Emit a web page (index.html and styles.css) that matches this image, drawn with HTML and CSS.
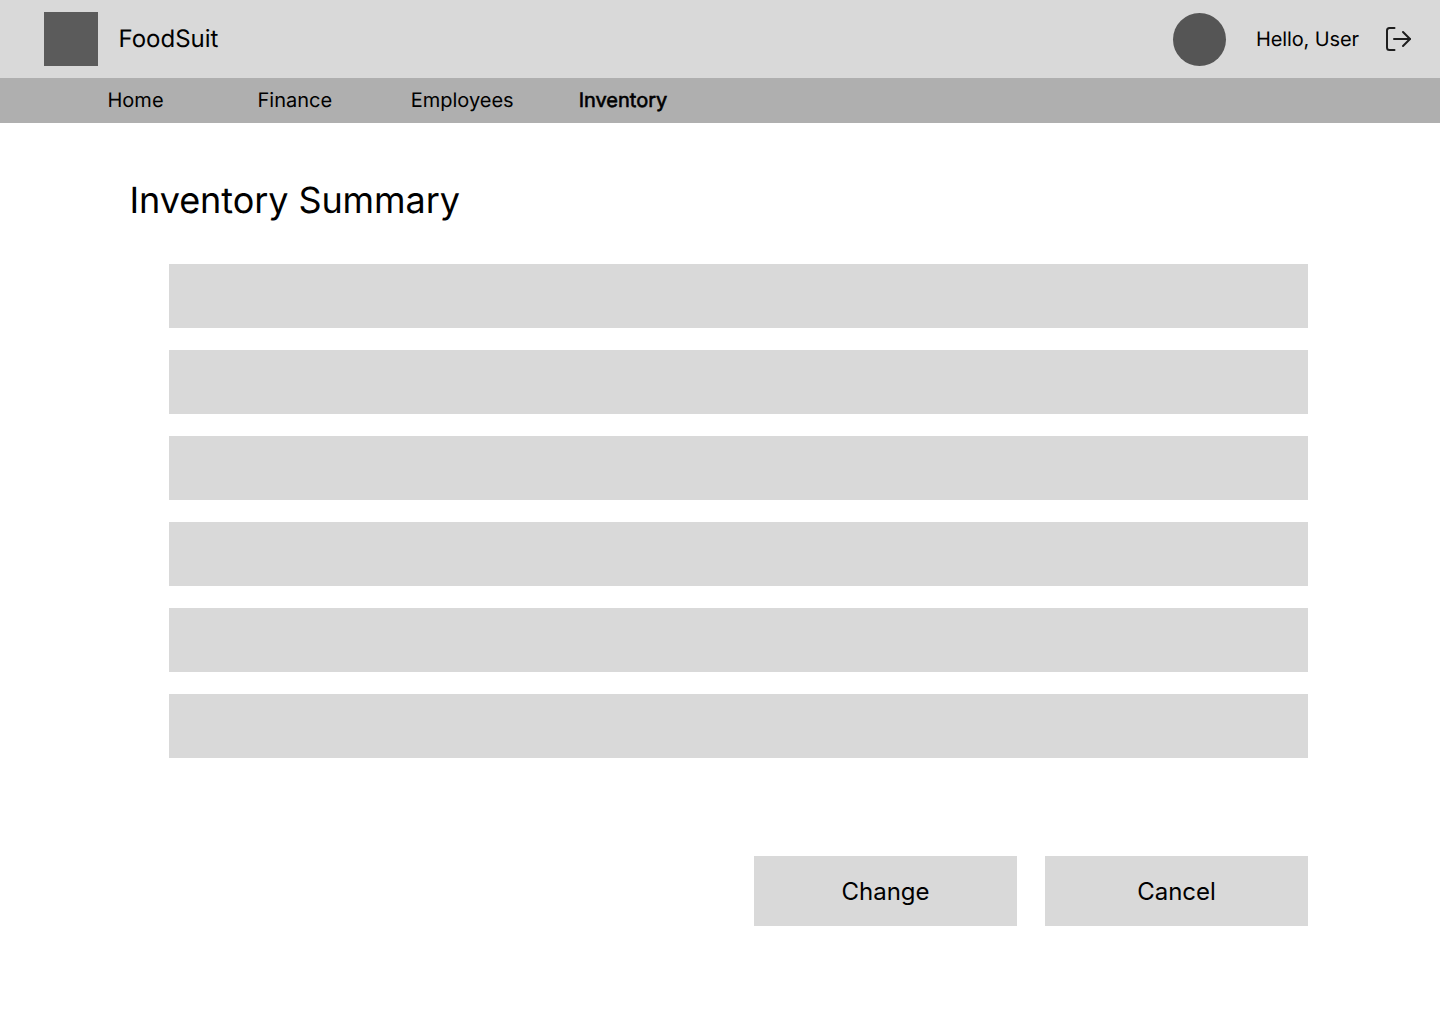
FILE: index.html
```html
<!DOCTYPE html>
<html lang="en">
<head>
    <meta charset="UTF-8">
    <meta name="viewport" content="width=device-width, initial-scale=1.0">
    <title>FoodSuit - Inventory Summary</title>
    <link rel="stylesheet" href="styles.css">
</head>
<body>
    <header class="topbar">
        <div class="brand">
            <div class="logo"></div>
            <span class="brand-name">FoodSuit</span>
        </div>
        <div class="user">
            <div class="avatar"></div>
            <span class="greeting">Hello, User</span>
            <svg class="logout" width="28" height="28" viewBox="0 0 28 28" fill="none" stroke="#1e1e1e" stroke-width="2" stroke-linecap="round" stroke-linejoin="round">
                <path d="M10.500 3H5.500C4 3 3 4 3 5.500V22.500C3 24 4 25 5.500 25H10.500"/>
                <path d="M10 14H26"/>
                <path d="M19 7L26 14L19 21"/>
            </svg>
        </div>
    </header>

    <nav class="mainnav">
        <a class="nav-home">Home</a>
        <a class="nav-finance">Finance</a>
        <a class="nav-employees">Employees</a>
        <a class="nav-inventory active">Inventory</a>
    </nav>

    <main class="content">
        <h1>Inventory Summary</h1>
        <div class="rows">
            <div class="row"></div>
            <div class="row"></div>
            <div class="row"></div>
            <div class="row"></div>
            <div class="row"></div>
            <div class="row"></div>
        </div>
        <div class="actions">
            <button class="btn">Change</button>
            <button class="btn">Cancel</button>
        </div>
    </main>
</body>
</html>
```

FILE: styles.css
```css
* {
  box-sizing: border-box;
}

body {
  margin: 0;
  background: #fff;
  color: #000;
  font-family: Inter, "Liberation Sans", sans-serif;
  text-rendering: geometricPrecision;
}

/*top bar*/
.topbar {
  height: 78px;
  background: #d9d9d9;
  display: flex;
  justify-content: space-between;
  align-items: center;
  padding: 0 28px 0 44px;
}
.brand {
  display: flex;
  align-items: center;
  gap: 20.5px;
}
.logo {
  width: 54px;
  height: 54px;
  background: #5b5b5b;
}
.brand-name {
  font-size: 24px;
  margin-bottom: 2px;
}
.user {
  display: flex;
  align-items: center;
}
.avatar {
  width: 53px;
  height: 53px;
  border-radius: 50%;
  background: #555;
  margin-right: 30px;
}
.greeting {
  font-size: 20px;
  letter-spacing: -0.1px;
  margin-right: 25px;
}

/*nav*/
.mainnav {
  height: 45px;
  background: #afafaf;
  display: flex;
  align-items: center;
  padding: 0 0 1px 107.5px;
  font-size: 20px;
}
.nav-home {
  margin-right: 94px;
}
.nav-finance {
  margin-right: 78.5px;
}
.nav-employees {
  margin-right: 65px;
}
.active {
  -webkit-text-stroke: 0.6px #000;
}

/*content*/
.content {
  padding: 55px 132px 0 130px;
}
h1 {
  margin: 0 0 42px -0.5px;
  font-size: 36px;
  font-weight: 400;
  letter-spacing: -0.08px;
  line-height: 44px;
}
.rows {
  margin-left: 39px;
  display: flex;
  flex-direction: column;
  gap: 22px;
}
.row {
  height: 64px;
  background: #d9d9d9;
}
.actions {
  margin-top: 98px;
  display: flex;
  justify-content: flex-end;
  gap: 28px;
}
.btn {
  width: 263px;
  height: 70px;
  border: none;
  background: #d9d9d9;
  color: #000;
  font-family: inherit;
  font-size: 24px;
}
```
